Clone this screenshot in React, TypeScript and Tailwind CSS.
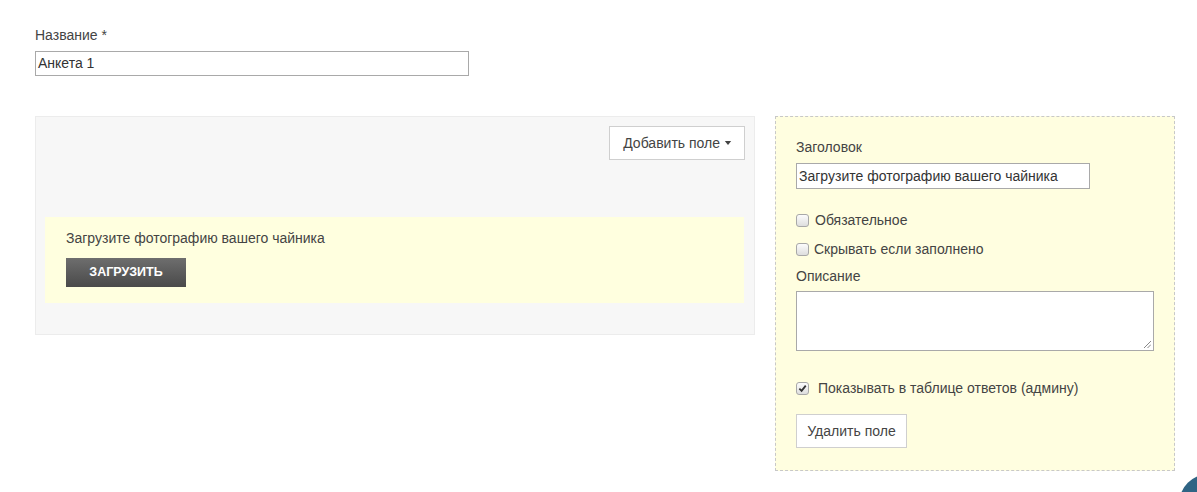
import React from "react";

const font = { fontFamily: '"Liberation Sans", Arial, sans-serif' };

function Check({ checked = false }: { checked?: boolean }) {
  return (
    <span className="inline-flex h-[13px] w-[13px] shrink-0 items-center justify-center rounded-[3px] border border-[#a8a8a8] bg-gradient-to-b from-[#fcfcfc] to-[#dedede]">
      {checked && (
        <svg viewBox="0 0 10 10" className="h-[9px] w-[9px]">
          <path d="M1.5 5.2 L4 7.6 L8.6 1.8" fill="none" stroke="#333" strokeWidth="2" />
        </svg>
      )}
    </span>
  );
}

export default function App() {
  return (
    <div className="relative min-h-[492px] overflow-hidden bg-white text-[14px] text-[#444]" style={font}>
      <div className="px-[35px] pt-[27px]">
        <label className="block leading-[16px]">Название *</label>
        <div className="mt-[8px] flex h-[25px] w-[434px] items-center border border-[#a9a9a9] px-[2px] text-[#333]">
          Анкета 1
        </div>
      </div>

      <div className="mt-[40px] flex items-start gap-[20px] pl-[35px]">
        <div className="flex h-[219px] w-[720px] flex-col border border-[#ececec] bg-[#f7f7f7] px-[9px] pt-[9px]">
          <div className="flex justify-end">
            <button className="flex h-[34px] items-center gap-[4px] border border-[#cfcfcf] bg-white pl-[13px] pr-[12px] text-[#444]">
              Добавить поле
              <svg viewBox="0 0 8 5" className="h-[4px] w-[8px]">
                <path d="M0 0 H8 L4 5 Z" fill="#444" />
              </svg>
            </button>
          </div>
          <div className="mt-[57px] mr-[1px] h-[86px] bg-[#ffffdf] px-[21px] pt-[13px]">
            <p className="leading-[16px]">Загрузите фотографию вашего чайника</p>
            <button className="mt-[12px] flex h-[29px] w-[120px] items-center justify-center bg-gradient-to-b from-[#6e6e6e] to-[#4a4a4a] text-[12.5px] font-bold text-white">
              ЗАГРУЗИТЬ
            </button>
          </div>
        </div>

        <div className="flex h-[355px] w-[400px] flex-col border border-dashed border-[#c8c8c8] bg-[#fffee0] px-[20px] pt-[22px]">
          <label className="leading-[16px]">Заголовок</label>
          <div className="mt-[8px] flex h-[26px] w-[294px] items-center border border-[#a9a9a9] bg-white px-[2px] text-[#333]">
            Загрузите фотографию вашего чайника
          </div>
          <div className="mt-[23px] flex items-center gap-[6px] leading-[16px]">
            <Check />
            <span>Обязательное</span>
          </div>
          <div className="mt-[13px] flex items-center gap-[5px] leading-[16px]">
            <Check />
            <span>Скрывать если заполнено</span>
          </div>
          <label className="mt-[11px] leading-[16px]">Описание</label>
          <div className="relative mt-[7px] h-[60px] w-[358px] border border-[#a9a9a9] bg-white">
            <svg viewBox="0 0 8 8" className="absolute bottom-[2px] right-[2px] h-[8px] w-[8px]">
              <path d="M1 8 L8 1 M4.5 8 L8 4.5" stroke="#888" strokeWidth="1" />
            </svg>
          </div>
          <div className="mt-[29px] flex items-center gap-[9px] leading-[16px]">
            <Check checked />
            <span>Показывать в таблице ответов (админу)</span>
          </div>
          <button className="mt-[18px] flex h-[34px] w-[111px] items-center justify-center border border-[#cfcfcf] bg-white text-[#444]">
            Удалить поле
          </button>
        </div>
      </div>

      <div className="absolute bottom-[-42px] right-[-42px] h-[60px] w-[60px] rounded-full bg-[#2f6484]" />
    </div>
  );
}
